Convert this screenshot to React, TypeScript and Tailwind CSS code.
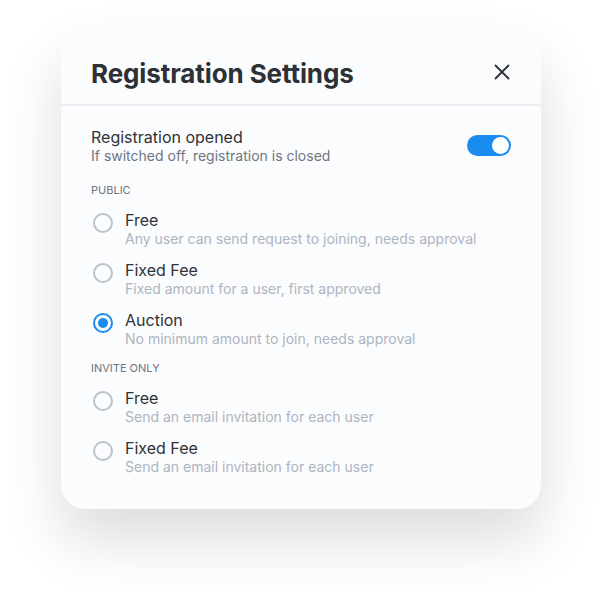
import React, { useState } from "react";

type Option = { id: string; label: string; hint: string };

const publicOptions: Option[] = [
  { id: "pub-free", label: "Free", hint: "Any user can send request to joining, needs approval" },
  { id: "pub-fixed", label: "Fixed Fee", hint: "Fixed amount for a user, first approved" },
  { id: "pub-auction", label: "Auction", hint: "No minimum amount to join, needs approval" },
];

const inviteOptions: Option[] = [
  { id: "inv-free", label: "Free", hint: "Send an email invitation for each user" },
  { id: "inv-fixed", label: "Fixed Fee", hint: "Send an email invitation for each user" },
];

const RadioRow = ({ option, checked, onSelect }: { option: Option; checked: boolean; onSelect: () => void }) => (
  <button type="button" onClick={onSelect} className="ml-[2px] flex items-start gap-[12px] text-left">
    <span
      className={
        checked
          ? "mt-[3px] flex h-[20px] w-[20px] items-center justify-center rounded-full border-2 border-[#1a8cf0]"
          : "mt-[3px] flex h-[20px] w-[20px] items-center justify-center rounded-full border-2 border-[#bcc2cd]"
      }
    >
      {checked && <span className="h-[10px] w-[10px] rounded-full bg-[#1a8cf0]" />}
    </span>
    <span className="flex flex-col">
      <span className="text-[16px] leading-[20px] text-[#2f3237]">{option.label}</span>
      <span className="text-[14px] leading-[18px] text-[#adb5c1]">{option.hint}</span>
    </span>
  </button>
);

const App = () => {
  const [open, setOpen] = useState(true);
  const [selected, setSelected] = useState("pub-auction");

  return (
    <main className="flex min-h-screen w-full justify-center bg-white pt-[30px] font-['Inter',sans-serif]">
      <section className="flex h-[479px] w-[480px] flex-col rounded-[24px] bg-[#fbfcfd] shadow-[0_30px_60px_rgba(0,0,0,0.14)]">
        <header className="flex h-[76px] items-center justify-between border-b-2 border-[#eceef1] pl-[30px] pr-[31px] pt-[14px] pb-[2px]">
          <h1 className="text-[26px] font-bold tracking-[-0.1px] text-[#2d3035]">Registration Settings</h1>
          <button type="button" className="mt-[-2px] text-[#2d3035]">
            <svg width="16" height="16" viewBox="0 0 16 16" fill="none" stroke="currentColor" strokeWidth="1.8" strokeLinecap="round">
              <path d="M1.5 1.5l13 13M14.5 1.5l-13 13" />
            </svg>
          </button>
        </header>
        <div className="flex flex-col px-[30px] pt-[21px]">
          <div className="flex items-center justify-between">
            <div className="flex flex-col">
              <span className="text-[16px] leading-[20px] text-[#2f3237]">Registration opened</span>
              <span className="text-[14px] leading-[18px] text-[#6e7581]">If switched off, registration is closed</span>
            </div>
            <button
              type="button"
              onClick={() => setOpen(!open)}
              className={
                open
                  ? "mt-[-2px] flex h-[21px] w-[44px] items-center justify-end rounded-full bg-[#1a8cf0] p-[2px]"
                  : "mt-[-2px] flex h-[21px] w-[44px] items-center justify-start rounded-full bg-[#cfd4dc] p-[2px]"
              }
            >
              <span className="h-[17px] w-[17px] rounded-full bg-white" />
            </button>
          </div>
          <div className="mt-[18px] text-[11px] leading-[14px] text-[#6e7581]">PUBLIC</div>
          <div className="mt-[13px] flex flex-col gap-[12px]">
            {publicOptions.map((o) => (
              <RadioRow key={o.id} option={o} checked={selected === o.id} onSelect={() => setSelected(o.id)} />
            ))}
          </div>
          <div className="mt-[13px] text-[11px] leading-[14px] text-[#6e7581]">INVITE ONLY</div>
          <div className="mt-[13px] flex flex-col gap-[12px]">
            {inviteOptions.map((o) => (
              <RadioRow key={o.id} option={o} checked={selected === o.id} onSelect={() => setSelected(o.id)} />
            ))}
          </div>
        </div>
      </section>
    </main>
  );
};

export default App;
